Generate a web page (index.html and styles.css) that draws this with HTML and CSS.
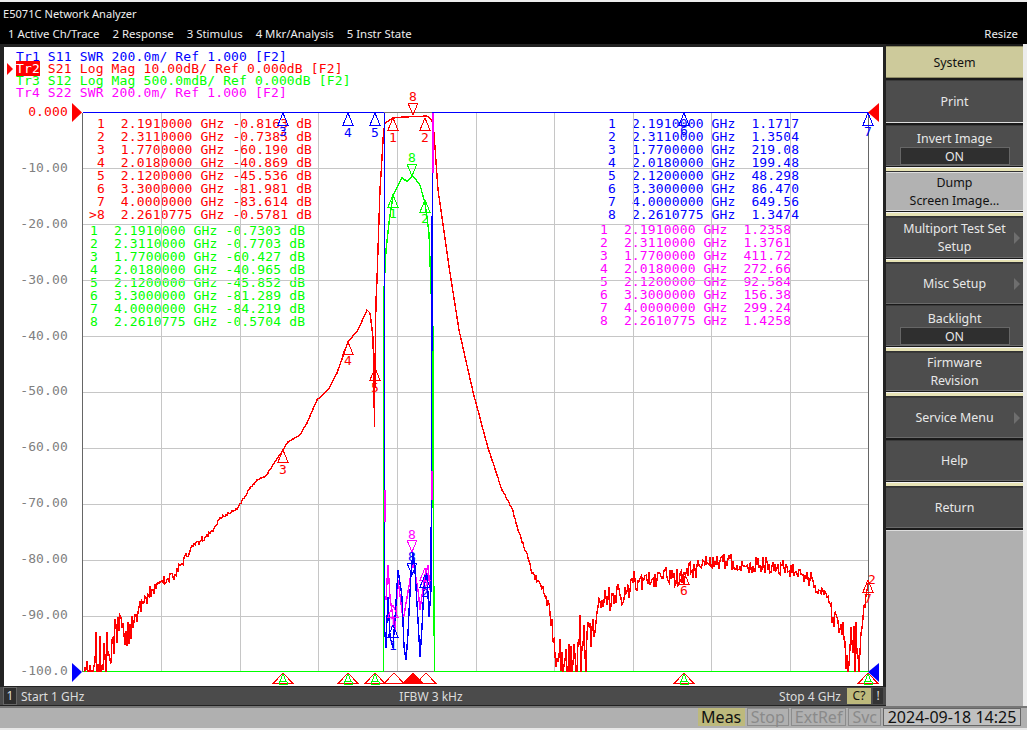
FILE: index.html
```html
<!DOCTYPE html>
<html lang="en">
<head>
    <meta charset="UTF-8">
    <title>E5071C Network Analyzer</title>
    <link rel="stylesheet" href="styles.css">
</head>
<body>
    <div class="topbar">
        <div class="title-row">E5071C Network Analyzer</div>
        <div class="menu-row">
            <span>1 Active Ch/Trace</span>
            <span>2 Response</span>
            <span>3 Stimulus</span>
            <span>4 Mkr/Analysis</span>
            <span>5 Instr State</span>
            <span class="resize">Resize</span>
        </div>
    </div>

    <div class="main">
        <div class="chart-col">
            <div class="chart">
                <div class="trace-head">
                    <div class="blue">Tr1 S11 SWR 200.0m/ Ref 1.000 [F2]</div>
                    <div class="red active-line"><span class="tr-box">Tr2</span> S21 Log Mag 10.00dB/ Ref 0.000dB [F2]</div>
                    <div class="green">Tr3 S12 Log Mag 500.0mdB/ Ref 0.000dB [F2]</div>
                    <div class="magenta">Tr4 S22 SWR 200.0m/ Ref 1.000 [F2]</div>
                </div>
                <div class="yscale">
                    <span class="red">0.000</span>
                    <span>-10.00</span>
                    <span>-20.00</span>
                    <span>-30.00</span>
                    <span>-40.00</span>
                    <span>-50.00</span>
                    <span>-60.00</span>
                    <span>-70.00</span>
                    <span>-80.00</span>
                    <span>-90.00</span>
                    <span>-100.0</span>
                </div>
                <pre class="readout readout-red red"> 1  2.1910000 GHz -0.8163 dB
 2  2.3110000 GHz -0.7385 dB
 3  1.7700000 GHz -60.190 dB
 4  2.0180000 GHz -40.869 dB
 5  2.1200000 GHz -45.536 dB
 6  3.3000000 GHz -81.981 dB
 7  4.0000000 GHz -83.614 dB
&gt;8  2.2610775 GHz -0.5781 dB</pre>
                <pre class="readout readout-green green">1  2.1910000 GHz -0.7303 dB
2  2.3110000 GHz -0.7703 dB
3  1.7700000 GHz -60.427 dB
4  2.0180000 GHz -40.965 dB
5  2.1200000 GHz -45.852 dB
6  3.3000000 GHz -81.289 dB
7  4.0000000 GHz -84.219 dB
8  2.2610775 GHz -0.5704 dB</pre>
                <pre class="readout readout-blue blue">1  2.1910000 GHz  1.1717
2  2.3110000 GHz  1.3504
3  1.7700000 GHz  219.08
4  2.0180000 GHz  199.48
5  2.1200000 GHz  48.298
6  3.3000000 GHz  86.470
7  4.0000000 GHz  649.56
8  2.2610775 GHz  1.3474</pre>
                <pre class="readout readout-magenta magenta">1  2.1910000 GHz  1.2358
2  2.3110000 GHz  1.3761
3  1.7700000 GHz  411.72
4  2.0180000 GHz  272.66
5  2.1200000 GHz  92.584
6  3.3000000 GHz  156.38
7  4.0000000 GHz  299.24
8  2.2610775 GHz  1.4258</pre>
                <svg id="plot" class="plot" viewBox="4 47 879 639" width="879" height="639"></svg>
            </div>
            <div class="channel-bar">
                <span class="channel-no">1</span>
                <span class="start">Start 1 GHz</span>
                <span class="ifbw">IFBW 3 kHz</span>
                <span class="stop">Stop 4 GHz</span>
                <span class="cal">C?</span>
                <span class="warn">!</span>
            </div>
        </div>

        <div class="softkeys">
            <div class="key key-title">System</div>
            <div class="key key-print">Print</div>
            <div class="key key-toggle">Invert Image<span class="toggle">ON</span></div>
            <div class="key-sep"></div>
            <div class="key key-light">Dump<br>Screen Image...</div>
            <div class="key-sep"></div>
            <div class="key key-sub">Multiport Test Set<br>Setup</div>
            <div class="key-sep short"></div>
            <div class="key key-sub">Misc Setup</div>
            <div class="key key-toggle">Backlight<span class="toggle">ON</span></div>
            <div class="key-sep"></div>
            <div class="key key-firmware">Firmware<br>Revision</div>
            <div class="key-sep"></div>
            <div class="key key-sub key-service">Service Menu</div>
            <div class="key">Help</div>
            <div class="key-sep"></div>
            <div class="key">Return</div>
            <div class="key-rest"></div>
        </div>
    </div>

    <div class="statusbar">
        <span class="status status-meas">Meas</span>
        <span class="status status-off">Stop</span>
        <span class="status status-off">ExtRef</span>
        <span class="status status-off">Svc</span>
        <span class="status status-clock">2024-09-18 14:25</span>
    </div>

    <script src="script.js"></script>
</body>
</html>
```

FILE: styles.css
```css
body {
    margin: 0;
    width: 1027px;
    height: 730px;
    overflow: hidden;
    background: #ececec;
    font-family: "Noto Sans", sans-serif;
    font-size: 12px;
    color: #e8e8e8;
}
.red { color: #ff0000; }
.green { color: #00ff00; }
.blue { color: #0000ff; }
.magenta { color: #ff00ff; }

.topbar {
    margin-top: 2px;
    height: 42px;
    background: #000;
    color: #eee;
}
.title-row {
    height: 22px;
    line-height: 24px;
    padding-left: 3px;
    font-size: 11.1px;
}
.menu-row {
    display: flex;
    height: 20px;
    line-height: 20px;
    padding-left: 8px;
    gap: 13px;
    font-size: 11.4px;
}
.resize {
    margin-left: auto;
    margin-right: 9px;
}

.main {
    display: flex;
    height: 662px;
}
.chart-col {
    width: 886px;
    background: #222;
    padding: 3px 0 0 4px;
    box-sizing: border-box;
}
.chart {
    position: relative;
    width: 879px;
    height: 639px;
    background: #fff;
    font-family: "DejaVu Sans Mono", monospace;
    font-size: 13px;
    letter-spacing: 0.14px;
}
.trace-head {
    padding: 4px 0 0 12px;
    line-height: 12px;
}
.trace-head div {
    white-space: pre;
}
.active-line {
    position: relative;
}
.active-line::before {
    content: "";
    position: absolute;
    left: -9px;
    top: 0;
    border-left: 6px solid #f00;
    border-top: 6px solid transparent;
    border-bottom: 6px solid transparent;
}
.tr-box {
    background: #f00;
    color: #fff;
}
.yscale {
    display: flex;
    flex-direction: column;
    gap: 41.9px;
    width: 64px;
    margin-top: 6px;
    text-align: right;
    line-height: 14px;
    color: #808080;
}
.readout {
    position: absolute;
    margin: 0;
    font: inherit;
    line-height: 13px;
}
.readout-red { left: 85px; top: 70px; }
.readout-green { left: 86px; top: 177px; }
.readout-blue { left: 604px; top: 70px; }
.readout-magenta { left: 596px; top: 176px; }
.plot {
    position: absolute;
    left: 0;
    top: 0;
    overflow: visible;
}

.channel-bar {
    display: flex;
    align-items: center;
    height: 18px;
    margin-top: 1px;
    margin-left: -4px;
    background: #4b4b4b;
    color: #ddd;
}
.channel-no {
    width: 12px;
    height: 16px;
    line-height: 16px;
    margin-left: 3px;
    text-align: center;
    background: #2e2e2e;
    border: 1px solid #666;
    box-sizing: content-box;
}
.start { margin-left: 4px; }
.ifbw { margin-left: 315px; }
.stop { margin-left: auto; }
.cal {
    width: 24px;
    height: 16px;
    line-height: 16px;
    margin-left: 6px;
    text-align: center;
    background: #bdb97c;
    color: #111;
}
.warn {
    width: 10px;
    height: 16px;
    line-height: 16px;
    margin: 0 3px 0 2px;
    text-align: center;
    background: #333;
}

.softkeys {
    display: flex;
    flex-direction: column;
    width: 137px;
    padding: 2px 0 0 0;
    background: #1a1a1a;
    border-right: 4px solid #ececec;
    font-size: 12.4px;
}
.key {
    position: relative;
    flex: none;
    display: flex;
    flex-direction: column;
    justify-content: center;
    align-items: center;
    height: 41px;
    margin-bottom: 1px;
    padding-top: 1px;
    background: #4d4d4d;
    border-top: 1px solid #3a3a3a;
    border-bottom: 1px solid #6a6a6a;
    box-sizing: border-box;
    text-align: center;
    line-height: 18px;
}
.key-title {
    height: 32px;
    margin-bottom: 2px;
    background: #cdca9b;
    color: #111;
    border-color: #8f8c66;
}
.key-print {
    height: 43px;
    margin-bottom: 2px;
    border-bottom-color: #ddd;
}
.key-toggle {
    justify-content: flex-start;
    padding-top: 5px;
    line-height: 16px;
}
.toggle {
    width: 110px;
    height: 18px;
    line-height: 17px;
    background: #2f2f2f;
    border: 1px solid #666;
    box-sizing: border-box;
}
.key-light {
    height: 39px;
    background: #b2b2b2;
    color: #111;
    border-color: #ddd;
}
.key-firmware {
    height: 39px;
}
.key-service {
    margin-bottom: 2px;
}
.key-sub::after {
    content: "";
    position: absolute;
    right: 3px;
    top: 50%;
    margin-top: -6px;
    border-left: 6px solid #6e6e6e;
    border-top: 6px solid transparent;
    border-bottom: 6px solid transparent;
}
.key-sep {
    flex: none;
    height: 5px;
    box-sizing: border-box;
    background: #e6e2b4;
    border-top: 1px solid #f4f4f4;
    border-bottom: 1px solid #333;
}
.key-sep.short {
    height: 4px;
}
.key-rest {
    flex: 1;
    background: #b0b0b0;
    border-top: 1px solid #ddd;
    margin-top: 1px;
}

.statusbar {
    display: flex;
    justify-content: flex-end;
    gap: 2px;
    box-sizing: border-box;
    height: 24px;
    padding: 0 6px 2px 0;
    background: #b0b0b0;
    border-top: 2px solid #777;
    border-bottom: 2px solid #e8e8e8;
    font-size: 16px;
    color: #111;
}
.status {
    display: flex;
    align-items: center;
    justify-content: center;
    height: 18px;
    border: 1px solid #8c8c8c;
    box-sizing: border-box;
}
.status-meas {
    width: 47px;
    background: #bdb97c;
    border-color: #bdb97c;
}
.status-off {
    padding: 0 3px;
    color: #8a8a8a;
}
.status-clock {
    width: 138px;
    background: #c0c0c0;
    border-color: #666;
}
```

FILE: script.js
```js
// draws the grid, traces and markers of the analyzer plot, in page coordinates
const svg = document.getElementById('plot');
const NS = 'http://www.w3.org/2000/svg';
const RED = '#ff0000', GREEN = '#00ff00', BLUE = '#0000ff', MAGENTA = '#ff00ff';
const LEFT = 82.5, RIGHT = 868.5, TOP = 112.5, BOTTOM = 671.5;

let seed = 71;
function rnd() {
    seed = (seed * 16807) % 2147483647;
    return seed / 2147483647 * 2 - 1;
}

function add(tag, attrs, text) {
    const el = document.createElementNS(NS, tag);
    for (const k in attrs) el.setAttribute(k, attrs[k]);
    if (text) el.textContent = text;
    svg.appendChild(el);
    return el;
}

function line(x1, y1, x2, y2, color, w) {
    add('line', { x1, y1, x2, y2, stroke: color, 'stroke-width': w || 1, 'shape-rendering': 'crispEdges' });
}

// anchors are [x, y, noise]; the noise is kept above the bottom of the grid
function trace(anchors, color, w) {
    let d = `M${anchors[0][0]} ${anchors[0][1]}`;
    for (let i = 1; i < anchors.length; i++) {
        const a = anchors[i - 1], b = anchors[i];
        const steps = Math.round(Math.abs(b[0] - a[0]));
        for (let s = 1; s < steps; s++) {
            const t = s / steps;
            const amp = a[2] + (b[2] - a[2]) * t;
            const y = a[1] + (b[1] - a[1]) * t + rnd() * amp;
            d += `L${(a[0] + (b[0] - a[0]) * t).toFixed(1)} ${Math.min(y, BOTTOM).toFixed(1)}`;
        }
        d += `L${b[0]} ${Math.min(b[1], BOTTOM)}`;
    }
    add('path', { d, fill: 'none', stroke: color, 'stroke-width': w || 1.4, 'shape-rendering': 'crispEdges' });
}

function label(x, y, color, text) {
    add('text', { x, y: y + 4.5, fill: color, 'text-anchor': 'middle' }, text);
}

function marker(x, tip, dir, color, text, labelY, labelX) {
    const base = tip + dir * 12;
    add('polygon', {
        points: `${x},${tip} ${x - 5},${base} ${x + 5},${base}`,
        fill: 'none', stroke: color, 'stroke-width': 1, 'shape-rendering': 'crispEdges'
    });
    if (text) label(labelX || x, labelY, color, text);
}

function bottomMarker(x, filled, stem) {
    add('polygon', {
        points: `${x},673 ${x - 9.5},683 ${x + 9.5},683`,
        fill: filled ? RED : 'none', stroke: RED, 'stroke-width': 1, 'shape-rendering': 'crispEdges'
    });
    if (stem) {
        add('polygon', {
            points: `${x},674 ${x - 3},681 ${x + 3},681`,
            fill: 'none', stroke: GREEN, 'stroke-width': 1, 'shape-rendering': 'crispEdges'
        });
        line(x - 4, 684.5, x + 4, 684.5, GREEN);
        line(x - 4, 681.5, x - 4, 684.5, GREEN);
        line(x + 4, 681.5, x + 4, 684.5, GREEN);
    }
}

// grid
for (let i = 1; i < 10; i++) {
    const x = Math.round(LEFT + 78.6 * i) + 0.5;
    line(x, TOP, x, BOTTOM, '#c6c6c6');
    const y = Math.round(TOP + 55.9 * i) + 0.5;
    line(LEFT, y, RIGHT, y, '#c6c6c6');
}
line(LEFT, TOP, LEFT, BOTTOM, '#666');
line(RIGHT, TOP, RIGHT, BOTTOM, '#666');
line(384, TOP, 433, TOP, '#777');
line(384, BOTTOM, 435, BOTTOM, '#777');

// S22 in the passband, sits behind S11
trace([[386, 600, 0], [388, 565, 1], [390, 597, 1], [393, 617, 1], [395, 630, 1], [398, 580, 1],
    [403, 620, 1], [410, 580, 1], [413, 560, 1], [418, 590, 1], [420, 610, 1], [425, 575, 1],
    [428, 565, 1], [430, 590, 1]], MAGENTA);

// S12
trace([[383.5, BOTTOM, 0], [383.5, 477, 0], [384, 290, 0], [386, 250, 0.5], [389, 223, 0.5], [393, 195, 0.5],
    [402, 178, 0.3], [407, 181, 0.3], [413, 176, 0.3], [420, 185, 0.3], [425, 203, 0.3], [429, 233, 0.3],
    [431, 290, 0], [433, 330, 0], [433, 480, 0], [434, 610, 0], [434.5, BOTTOM, 0]], GREEN);
line(LEFT, BOTTOM, 384, BOTTOM, GREEN, 1.6);
line(434, BOTTOM, RIGHT, BOTTOM, GREEN, 1.6);

// S21
trace([[84, BOTTOM, 0], [90, 665, 32], [95, 662, 34], [108, 655, 28], [113, 638, 18], [122, 628, 22],
    [133, 628, 15], [138, 612, 10], [152, 590, 7], [160, 582, 4], [173, 577, 5], [180, 565, 4],
    [195, 545, 3], [213, 531, 2], [220, 518, 1.5], [237, 509, 1], [250, 488, 1], [257, 480, 0.7],
    [265, 477, 0.7], [283, 450, 0.4], [288, 442, 0.3], [300, 435, 0.3], [307, 423, 0.3], [317, 400, 0.3],
    [328, 390, 0.3], [337, 373, 0.3], [348, 342, 0.2], [358, 330, 0.2], [367, 310, 0], [370, 313, 0],
    [373, 337, 0], [374.5, 427, 0], [375, 367, 0], [376, 300, 0], [377, 280, 0], [380, 190, 0],
    [383.5, 133, 0], [385, 123, 0], [393, 118, 0], [403, 117, 0], [427, 116, 0], [432, 120, 0],
    [434, 133, 0], [438, 190, 0], [450, 273, 0], [459, 330, 0.2], [473, 392, 0.3], [488, 448, 0.3],
    [502, 490, 0.5], [512, 508, 1], [518, 530, 1.3], [528, 558, 2], [532, 573, 3], [543, 587, 4.5],
    [550, 613, 8], [555, 655, 20], [565, 660, 40], [575, 655, 44], [585, 655, 36], [592, 628, 22],
    [602, 600, 14], [620, 595, 13], [635, 580, 12], [657, 579, 10], [683, 574, 12], [700, 567, 10], [723, 562, 9],
    [757, 565, 9], [787, 567, 9], [797, 574, 8], [813, 580, 8], [827, 597, 10], [833, 617, 13], [843, 622, 14],
    [847, 655, 34], [858, 655, 36], [862, 628, 16], [865, 607, 8], [868, 583, 1]], RED);

// S11
trace([[384.5, TOP, 0], [384.5, 628, 0], [386, 648, 0], [386.5, 630, 0], [388, 597, 1], [390, 637, 1], [393, 648, 1],
    [396, 603, 1], [398, 570, 1], [402, 597, 1], [404, 647, 1], [406, 660, 1], [408, 633, 1], [411, 573, 1],
    [413, 553, 1], [415, 570, 1], [418, 620, 1], [420, 657, 1], [422, 627, 1], [424, 587, 1], [427, 573, 1],
    [429, 617, 1], [431, 590, 0], [432, 300, 0], [432.5, TOP, 0]], BLUE);
line(LEFT, TOP, 384, TOP, BLUE, 1.6);
line(433, TOP, RIGHT, TOP, BLUE, 1.6);

// bits of S22 that show over S11
line(385, 490, 385, 522, MAGENTA, 2);
line(432.5, 113, 432.5, 173, MAGENTA, 2);
line(431.5, 471, 431.5, 500, MAGENTA, 2);

// scale pointers
add('polygon', { points: '72,103 82,112.5 72,122', fill: RED });
add('polygon', { points: '72,663 82,672 72,682', fill: BLUE });
add('polygon', { points: '879,103 868,112.5 879,122', fill: RED });
add('polygon', { points: '879,663 868,672 879,682', fill: BLUE });

// markers
marker(283, 113, 1, BLUE, '3', 131);
marker(348, 113, 1, BLUE, '4', 132);
marker(375, 113, 1, BLUE, '5', 132);
marker(684, 113, 1, BLUE, '6', 130);
marker(868, 113, 1, BLUE, '7', 131);

marker(393, 118, 1, RED, '1', 137);
marker(425, 118, 1, RED, '2', 137);
marker(413, 115, -1, RED, '8', 96);
marker(283, 450, 1, RED, '3', 469);
marker(348, 342, 1, RED, '4', 360);
marker(375, 368, 1, RED, '5', 387);
marker(684, 572, 1, RED, '6', 590);
marker(868, 580, 1, RED, '7', 598);
label(872, 579, RED, '2');

marker(393, 195, 1, GREEN, '1', 213);
marker(425, 200, 1, GREEN, '2', 218);
marker(412, 176, -1, GREEN, '8', 157);

marker(412, 552, -1, MAGENTA, '8', 534);
marker(393, 605, 1, MAGENTA, '1', 622);
marker(425, 568, 1, MAGENTA, '2', 585);
marker(412, 575, -1, BLUE, '8', 556);
marker(393, 625, 1, BLUE, '1', 645);
marker(425, 575, 1, BLUE, '2', 592);

[283, 348, 375, 684, 868].forEach(x => bottomMarker(x, false, true));
bottomMarker(394, false, false);
bottomMarker(426, false, false);
bottomMarker(413, true, false);
```
